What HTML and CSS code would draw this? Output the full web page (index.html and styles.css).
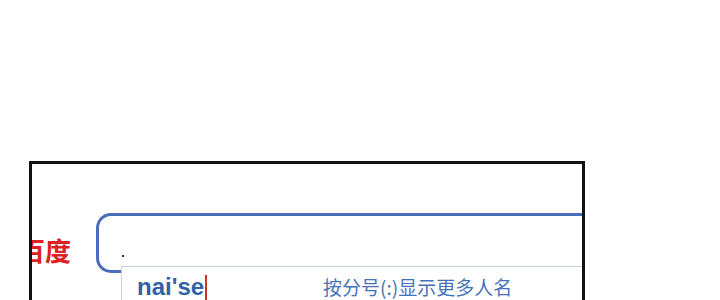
FILE: index.html
```html
<!DOCTYPE html>
<html lang="zh-CN">
<head>
    <meta charset="UTF-8">
    <title>百度</title>
    <link rel="stylesheet" href="styles.css">
</head>
<body>
    <div class="frame">
        <div class="search">
            <span class="logo">百度</span>
            <div class="box">
                <span class="dot"></span>
            </div>
        </div>
        <div class="suggest">
            <div class="query">nai'se<span class="caret"></span></div>
            <div class="hint">按分号(:)显示更多人名</div>
        </div>
    </div>
</body>
</html>
```

FILE: styles.css
```css
html, body {
    height: 300px;
    overflow: hidden;
}
body {
    margin: 0;
    background-color: #fff;
    font-family: "Liberation Sans", Arial, sans-serif;
}
.frame {
    position: relative;
    margin: 161px 0 0 29px;
    width: 556px;
    height: 200px;
    box-sizing: border-box;
    border: 3px solid #111;
    overflow: hidden;
}
.search {
    display: flex;
    align-items: flex-start;
    margin-top: 49px;
}
.logo {
    flex: none;
    margin: 23px 0 0 -13px;
    width: 61px;
    white-space: nowrap;
    font-family: "Noto Sans CJK SC", sans-serif;
    font-size: 26px;
    line-height: 28px;
    font-weight: bold;
    color: #dc2222;
}
.box {
    position: relative;
    flex: none;
    margin-left: 16px;
    width: 540px;
    height: 60px;
    box-sizing: border-box;
    border: 3px solid #4a6cbc;
    border-radius: 15px;
}
.dot {
    position: absolute;
    left: 23px;
    top: 39px;
    width: 2px;
    height: 2px;
    background-color: #333;
}
.suggest {
    position: absolute;
    left: 89px;
    top: 102px;
    width: 520px;
    height: 60px;
    display: flex;
    align-items: baseline;
    padding: 6px 0 0 15px;
    background-color: #fff;
    border: 1px solid #c8d2de;
    box-sizing: border-box;
}
.query {
    width: 186px;
    font-size: 24px;
    line-height: 28px;
    font-weight: bold;
    color: #2f62a6;
}
.caret {
    display: inline-block;
    width: 2px;
    height: 25px;
    margin-left: 1px;
    vertical-align: -5px;
    background-color: #d0302c;
}
.hint {
    font-family: "Noto Sans CJK SC", sans-serif;
    font-size: 19px;
    color: #4573b8;
}
```
